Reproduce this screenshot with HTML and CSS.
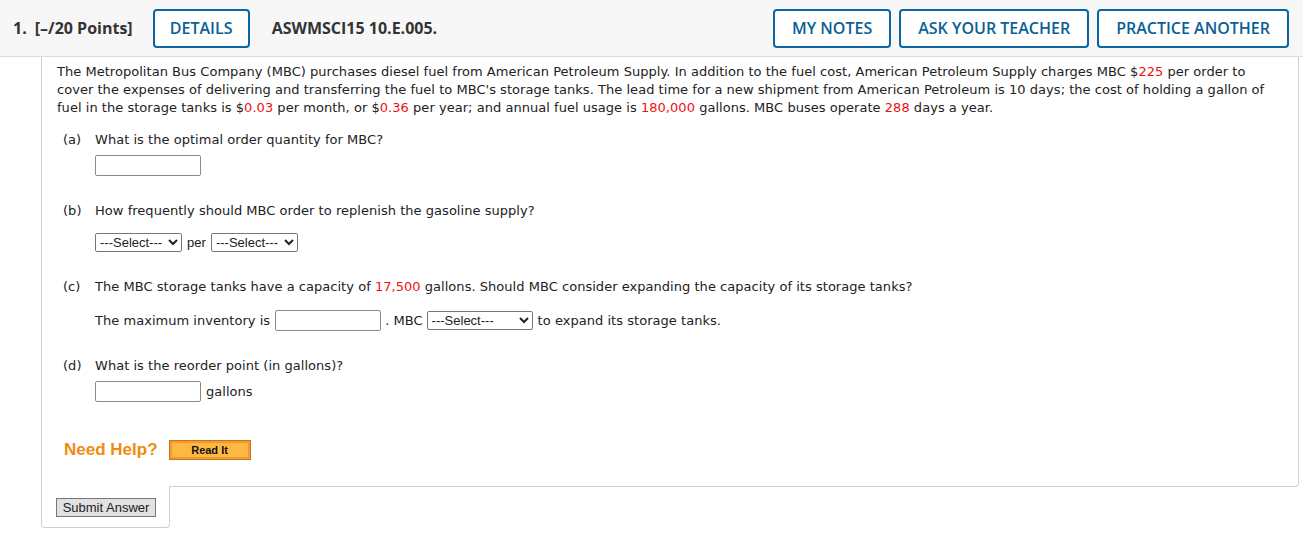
FILE: index.html
```html
<!DOCTYPE html>
<html>
<head>
<meta charset="utf-8">
<link rel="stylesheet" href="styles.css">
</head>
<body>
<header class="qhead">
  <span class="qnum">1.</span>
  <span class="qpoints">[–/20 Points]</span>
  <button class="hbtn details">DETAILS</button>
  <span class="qcode">ASWMSCI15 10.E.005.</span>
  <div class="hright">
    <button class="hbtn">MY NOTES</button>
    <button class="hbtn">ASK YOUR TEACHER</button>
    <button class="hbtn">PRACTICE ANOTHER</button>
  </div>
</header>
<main class="qbox">
  <p class="intro">The Metropolitan Bus Company (MBC) purchases diesel fuel from American Petroleum Supply. In addition to the fuel cost, American Petroleum Supply charges MBC $<span class="red">225</span> per order to cover the expenses of delivering and transferring the fuel to MBC's storage tanks. The lead time for a new shipment from American Petroleum is 10 days; the cost of holding a gallon of fuel in the storage tanks is $<span class="red">0.03</span> per month, or $<span class="red">0.36</span> per year; and annual fuel usage is <span class="red">180,000</span> gallons. MBC buses operate <span class="red">288</span> days a year.</p>

  <div class="part pa">
    <div class="qline"><span class="lbl">(a)</span><span>What is the optimal order quantity for MBC?</span></div>
    <div class="ans ans-a"><input class="tin" type="text"></div>
  </div>

  <div class="part pb">
    <div class="qline"><span class="lbl">(b)</span><span>How frequently should MBC order to replenish the gasoline supply?</span></div>
    <div class="ans ans-b">
      <select class="sel sel-sm"><option>---Select---</option></select>
      <span class="ctl-text">per</span>
      <select class="sel sel-sm"><option>---Select---</option></select>
    </div>
  </div>

  <div class="part pc">
    <div class="qline"><span class="lbl">(c)</span><span>The MBC storage tanks have a capacity of <span class="red">17,500</span> gallons. Should MBC consider expanding the capacity of its storage tanks?</span></div>
    <div class="ans ans-c">
      <span>The maximum inventory is</span>
      <input class="tin" type="text">
      <span>. MBC</span>
      <select class="sel sel-lg"><option>---Select---</option></select>
      <span>to expand its storage tanks.</span>
    </div>
  </div>

  <div class="part pd">
    <div class="qline"><span class="lbl">(d)</span><span>What is the reorder point (in gallons)?</span></div>
    <div class="ans ans-d"><input class="tin" type="text"><span>gallons</span></div>
  </div>

  <div class="help">
    <span class="needhelp">Need Help?</span>
    <button class="readit">Read It</button>
  </div>
</main>
<div class="submit-tab">
  <button class="submit">Submit Answer</button>
</div>
</body>
</html>
```

FILE: styles.css
```css
* { box-sizing: border-box; }
body {
  margin: 0;
  background: #fff;
  font-family: "DejaVu Sans", Verdana, sans-serif;
  font-size: 13px;
  letter-spacing: 0.035px;
  color: #222;
}
.qhead {
  display: flex;
  align-items: center;
  height: 57px;
  background: #f7f7f7;
  border-bottom: 1px solid #dcdcdc;
  padding: 0 14px 0 13px;
  font-family: "Open Sans", sans-serif;
  letter-spacing: 0;
  color: #333;
}
.qnum { font-weight: 700; font-size: 16px; margin-right: 8px; }
.qpoints { font-weight: 700; font-size: 16px; margin-right: 20px; }
.qcode { font-weight: 700; font-size: 16px; margin-left: 22px; }
.hbtn {
  font-family: "Open Sans", sans-serif;
  font-size: 16px;
  font-weight: 600;
  color: #0a5f96;
  background: #fff;
  border: 2px solid #0b66a1;
  border-radius: 4px;
  height: 39px;
  padding: 0 17px;
  cursor: pointer;
}
.details { width: 97px; padding: 0; }
.hright { margin-left: auto; display: flex; gap: 8px; }
.qbox {
  margin: 0 4px 0 41px;
  border: 1px solid #cfcfcf;
  border-top: none;
  border-radius: 0 0 4px 0;
  padding: 6px 20px 26px 15px;
}
.intro {
  margin: 0;
  line-height: 18px;
}
.red { color: #ee1111; }
.part { padding-left: 6px; }
.qline { display: flex; line-height: 18px; }
.lbl { width: 32px; flex: none; }
.pa { margin-top: 14px; }
.pb, .pc, .pd { margin-top: 26px; }
.ans { padding-left: 32px; display: flex; align-items: center; }
.ans-a { margin-top: 6px; }
.ans-b { margin-top: 13px; }
.ans-c { margin-top: 14px; }
.ans-d { margin-top: 6px; }
.tin {
  width: 106px;
  height: 21px;
  border: 1px solid #8a8a8a;
  border-radius: 2px;
  margin: 0;
  padding: 0 4px;
  background: #fff;
}
.sel {
  font-family: "Liberation Sans", Arial, sans-serif;
  font-size: 13px;
  letter-spacing: 0;
  height: 19px;
  border: 1px solid #777;
  border-radius: 2px;
  background: #fff;
  color: #222;
  padding: 0;
}
.sel-sm { width: 87px; }
.sel-lg { width: 106px; }
.ans-b .ctl-text { margin: 0 5px 0 5px; font-family: "Liberation Sans", Arial, sans-serif; }
.ans-c .tin { margin: 0 4px 0 5px; }
.ans-c .sel { margin: 0 5px 0 4px; }
.ans-d span { margin-left: 5px; }
.help {
  display: flex;
  align-items: center;
  margin-top: 38px;
  padding-left: 7px;
}
.needhelp {
  font-family: "Liberation Sans", Arial, sans-serif;
  font-weight: 700;
  font-size: 17px;
  letter-spacing: 0;
  color: #f08a10;
  margin-right: 11px;
}
.readit {
  width: 82px;
  height: 20px;
  background: #fdb843;
  border: 1px solid #c67422;
  box-shadow: inset 0 0 0 2px #f59a2a;
  font-family: "Liberation Sans", Arial, sans-serif;
  font-weight: 700;
  font-size: 11px;
  letter-spacing: 0;
  color: #111;
  padding: 0;
}
.submit-tab {
  margin: -1px 0 0 41px;
  width: 129px;
  height: 42px;
  background: #fff;
  border: 1px solid #cfcfcf;
  border-top: none;
  border-radius: 0 0 4px 4px;
  padding: 12px 0 0 14px;
  position: relative;
}
.submit {
  width: 100px;
  height: 19px;
  background: #e1e1e1;
  border: 1px solid #777;
  font-family: "Liberation Sans", Arial, sans-serif;
  font-size: 13px;
  letter-spacing: 0;
  color: #222;
  padding: 0;
}
```
